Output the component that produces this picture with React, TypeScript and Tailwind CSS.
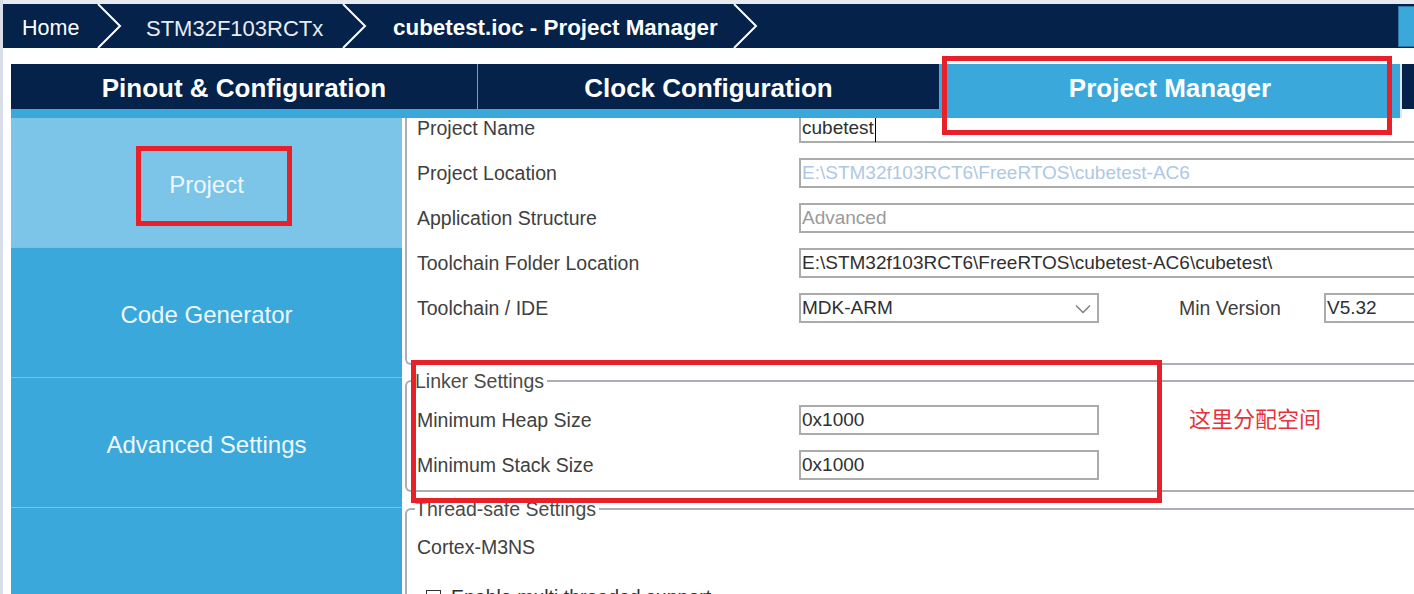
import type { ReactNode } from "react";

const NAVY = "bg-[#04224a]";

function Chevron() {
  return (
    <svg width="25" height="44" viewBox="0 0 25 44" className="shrink-0">
      <polyline points="1,0 23,22 1,44" fill="none" stroke="white" strokeWidth="2" />
    </svg>
  );
}

function Tab({ label, width }: { label: string; width: string }) {
  return (
    <div className={`flex flex-col ${width}`}>
      <div className={`h-[45px] ${NAVY} border-r border-[#8797ad] flex items-center justify-center pt-[4px]`}>
        <span className="text-white font-bold text-[26px]">{label}</span>
      </div>
      <div className="h-[9px] bg-[#3aa8db]" />
    </div>
  );
}

function Row({ label, children }: { label: string; children: ReactNode }) {
  return (
    <div className="flex items-center h-[30px]">
      <div className="w-[382px] shrink-0 pt-[2px] text-[19.5px] text-[#404040]">{label}</div>
      {children}
    </div>
  );
}

function Box({
  children,
  width = "w-[700px]",
  tone = "text-[#2f2f2f]",
}: {
  children: ReactNode;
  width?: string;
  tone?: string;
}) {
  return (
    <div
      className={`h-[30px] shrink-0 ${width} border-2 border-[#ababab] bg-white flex items-center pl-[1px] pt-[1px] text-[19px] ${tone}`}
    >
      {children}
    </div>
  );
}

function SideItem({ label, active }: { label: string; active?: boolean }) {
  return (
    <div
      className={`h-[130px] flex items-center justify-center pt-[5px] text-[24px] text-[#eef7fc] border-b border-[#78c2e7] ${
        active ? "bg-[#7cc5e8]" : "bg-[#3aa8db]"
      }`}
    >
      {label}
    </div>
  );
}

export default function App() {
  return (
    <div className="relative w-[1414px] h-[594px] overflow-hidden bg-white flex font-['Liberation_Sans',Arial,sans-serif]">
      {/* left frame strip */}
      <div className="w-[3px] shrink-0 bg-[#d7dde9]" />

      <div className="flex-1 flex flex-col min-w-0">
        {/* breadcrumb */}
        <div className="h-[4px] bg-[#e6eaf1]" />
        <div className={`h-[44px] ${NAVY} flex items-center text-white`}>
          <div className="w-[94px] pl-[19px] pt-[4px] text-[21.5px]">Home</div>
          <Chevron />
          <div className="w-[220px] pl-[24px] pt-[4px] text-[22px] text-[#e9edf3]">STM32F103RCTx</div>
          <Chevron />
          <div className="w-[366px] pl-[26px] pt-[4px] text-[22.4px] font-bold">cubetest.ioc - Project Manager</div>
          <Chevron />
          <div className="ml-auto h-[41px] w-[16px] bg-[#3aa8db] border-l border-t border-b border-[#2a78a8]" />
        </div>

        <div className="h-[16px]" />

        <div className="flex-1 flex min-h-0">
          <div className="w-[8px] shrink-0" />
          <div className="flex-1 flex flex-col min-w-0">
            {/* tabs */}
            <div className="flex h-[54px] items-start">
              <Tab label="Pinout & Configuration" width="w-[467px]" />
              <Tab label="Clock Configuration" width="w-[462px]" />
              <div className="w-[460px] h-[54px] bg-[#3aa8db] flex items-start justify-center">
                <div className="h-[45px] flex items-center pt-[4px] text-white font-bold text-[26px]">
                  Project Manager
                </div>
              </div>
              <div className="w-[2px] h-[54px] bg-[#dfe6ee]" />
              <div className={`flex-1 h-[45px] ${NAVY}`} />
            </div>

            {/* body */}
            <div className="flex flex-1 min-h-0">
              <div className="w-[391px] shrink-0 flex flex-col bg-[#3aa8db]">
                <SideItem label="Project" active />
                <SideItem label="Code Generator" />
                <SideItem label="Advanced Settings" />
              </div>

              <div className="flex-1 overflow-hidden pl-[3px]">
                {/* project group */}
                <div className="-mt-[5px] w-[1200px] border-l-2 border-b-2 border-[#a9afb5] rounded-bl-[6px] pl-[10px] pb-[40px] flex flex-col gap-[15px]">
                  <Row label="Project Name">
                    <Box>
                      cubetest
                      <span className="ml-[1px] w-[1px] h-[26px] bg-black" />
                    </Box>
                  </Row>
                  <Row label="Project Location">
                    <Box tone="text-[#aec8e4]">E:\STM32f103RCT6\FreeRTOS\cubetest-AC6</Box>
                  </Row>
                  <Row label="Application Structure">
                    <Box tone="text-[#9a9a9a]">Advanced</Box>
                  </Row>
                  <Row label="Toolchain Folder Location">
                    <Box>E:\STM32f103RCT6\FreeRTOS\cubetest-AC6\cubetest\</Box>
                  </Row>
                  <Row label="Toolchain / IDE">
                    <Box width="w-[300px]">
                      <span className="flex-1">MDK-ARM</span>
                      <svg width="16" height="10" viewBox="0 0 16 10" className="mr-[6px]">
                        <polyline points="1,1.5 8,8.5 15,1.5" fill="none" stroke="#7a7a7a" strokeWidth="1.3" />
                      </svg>
                    </Box>
                    <div className="ml-[80px] w-[145px] shrink-0 pt-[2px] text-[19.5px] text-[#404040]">Min Version</div>
                    <Box width="w-[200px]">V5.32</Box>
                  </Row>
                </div>

                {/* linker settings */}
                <fieldset className="mt-[5px] w-[1200px] border-2 border-r-0 border-[#a9afb5] rounded-l-[6px] pl-[10px] pt-[13px] pb-[10px] flex flex-col gap-[15px]">
                  <legend className="-ml-[2px] pr-[3px] text-[19.5px] leading-[22px] text-[#4a4a4a]">
                    Linker Settings
                  </legend>
                  <Row label="Minimum Heap Size">
                    <Box width="w-[300px]">0x1000</Box>
                  </Row>
                  <Row label="Minimum Stack Size">
                    <Box width="w-[300px]">0x1000</Box>
                  </Row>
                </fieldset>

                {/* thread-safe settings */}
                <fieldset className="mt-[6px] w-[1200px] border-2 border-r-0 border-b-0 border-[#a9afb5] rounded-tl-[6px] pl-[10px] pt-[17px]">
                  <legend className="-ml-[2px] pr-[3px] text-[19.5px] leading-[22px] text-[#4a4a4a]">
                    Thread-safe Settings
                  </legend>
                  <div className="h-[22px] flex items-center text-[19.5px] text-[#404040]">Cortex-M3NS</div>
                  <div className="mt-[24px] flex items-center gap-[10px] pl-[9px] text-[19.5px] text-[#303030]">
                    <span className="w-[15px] h-[15px] border border-[#333] bg-white" />
                    Enable multi threaded support
                  </div>
                </fieldset>
              </div>
            </div>
          </div>
        </div>
      </div>

      {/* annotations */}
      <div className="absolute left-[942px] top-[56px] w-[450px] h-[79px] border-[5px] border-[#e8202a]" />
      <div className="absolute left-[136px] top-[146px] w-[156px] h-[80px] border-[5px] border-[#e8202a]" />
      <div className="absolute left-[411px] top-[360px] w-[751px] h-[143px] border-[5px] border-[#e8202a]" />
      <div className="absolute left-[1189px] top-[403px] text-[22px] leading-[28px] text-[#e6333b] font-['Noto_Sans_CJK_SC',sans-serif]">
        这里分配空间
      </div>
    </div>
  );
}
